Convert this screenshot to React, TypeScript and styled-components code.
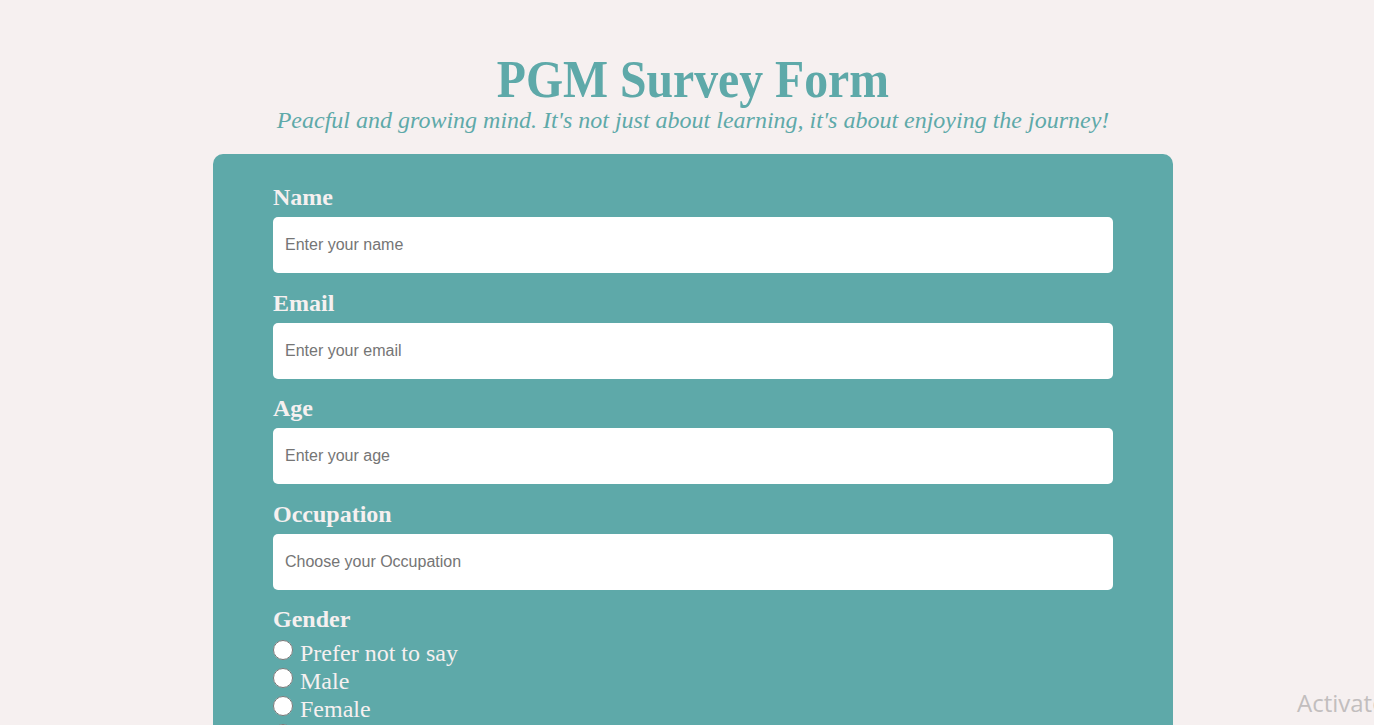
import React from "react";
import styled, { createGlobalStyle } from "styled-components";

const Global = createGlobalStyle`
  html, body { margin: 0; padding: 0; background: #f6f0f0; overflow: hidden; }
  body { font-family: "Liberation Serif", "Times New Roman", serif; }
  * { box-sizing: border-box; }
`;

const Page = styled.div`
  display: flex;
  flex-direction: column;
  align-items: center;
  padding: 52px 0 0 12px;
  min-height: 725px;
`;

const Title = styled.h1`
  margin: 0;
  color: #5ea9a9;
  font-size: 53px;
  font-weight: 700;
  line-height: 54px;
  transform: scaleX(0.9);
`;

const Subtitle = styled.p`
  margin: 0;
  color: #5ea9a9;
  font-style: italic;
  font-size: 24px;
  line-height: 28px;
`;

const Card = styled.form`
  margin-top: 20px;
  width: 960px;
  background: #5ea9a9;
  border-radius: 10px;
  padding: 29px 60px 40px;
  display: flex;
  flex-direction: column;
`;

const Field = styled.div`
  display: flex;
  flex-direction: column;
  margin-bottom: 15.5px;
`;

const Label = styled.label`
  color: #f6f0f0;
  font-weight: 700;
  font-size: 24px;
  line-height: 28px;
  margin-bottom: 6px;
`;

const Input = styled.input`
  height: 56px;
  border: none;
  border-radius: 5px;
  background: #fff;
  padding: 0 12px;
  font-family: "Liberation Sans", Arial, sans-serif;
  font-size: 16px;
  color: #333;
  &::placeholder { color: #757575; }
  outline: none;
`;

const RadioRow = styled.label`
  display: flex;
  align-items: center;
  height: 28px;
  color: #f6f0f0;
  font-size: 24px;
`;

const Radio = styled.input`
  width: 20px;
  height: 20px;
  margin: 0 7px 0 0;
  position: relative;
  top: -3px;
`;

const Watermark = styled.div`
  position: absolute;
  left: 1297px;
  top: 686px;
  font-family: "Open Sans", "Noto Sans", sans-serif;
  font-size: 24px;
  color: #c2bebe;
  white-space: nowrap;
`;

export default function App() {
  return (
    <>
      <Global />
      <Page>
        <Title>PGM Survey Form</Title>
        <Subtitle>
          Peacful and growing mind. It's not just about learning, it's about enjoying the journey!
        </Subtitle>
        <Card>
          <Field>
            <Label>Name</Label>
            <Input placeholder="Enter your name" />
          </Field>
          <Field>
            <Label>Email</Label>
            <Input placeholder="Enter your email" />
          </Field>
          <Field>
            <Label>Age</Label>
            <Input placeholder="Enter your age" />
          </Field>
          <Field>
            <Label>Occupation</Label>
            <Input placeholder="Choose your Occupation" />
          </Field>
          <Field>
            <Label>Gender</Label>
            <RadioRow><Radio type="radio" name="g" />Prefer not to say</RadioRow>
            <RadioRow><Radio type="radio" name="g" />Male</RadioRow>
            <RadioRow><Radio type="radio" name="g" />Female</RadioRow>
            <RadioRow><Radio type="radio" name="g" />Other</RadioRow>
          </Field>
        </Card>
      </Page>
      <Watermark>Activate Windows</Watermark>
    </>
  );
}
